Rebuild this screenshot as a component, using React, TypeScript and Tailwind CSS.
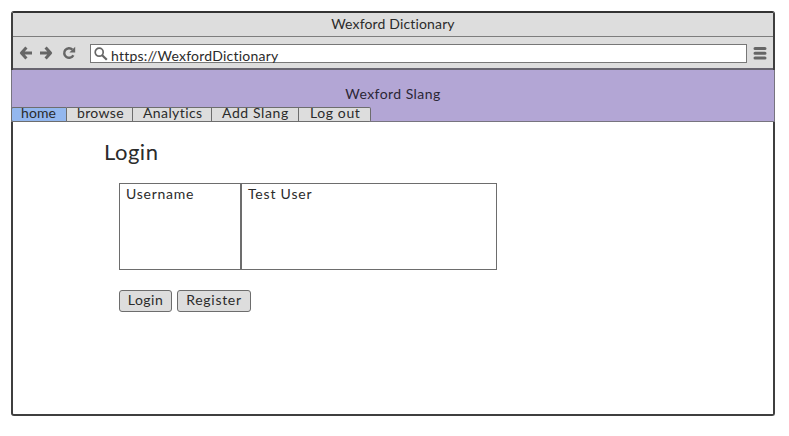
import React from "react";

const tabs = [
  { label: "home", cls: "w-[56px] pl-[9px] bg-[#93b7ee] tracking-[0.1px]" },
  { label: "browse", cls: "w-[66px] pl-[10px] bg-[#dddddd] tracking-[0.35px]" },
  { label: "Analytics", cls: "w-[79px] pl-[10px] bg-[#dddddd] tracking-[0.4px]" },
  { label: "Add Slang", cls: "w-[87px] pl-[10px] bg-[#dddddd] tracking-[0.6px]" },
  { label: "Log out", cls: "w-[72px] pl-[11px] bg-[#dddddd] tracking-[0.6px] rounded-r-[2px]" },
];

function BackIcon() {
  return (
    <svg width="14" height="14" viewBox="0 0 14 14" fill="none" stroke="#666" strokeWidth="3">
      <path d="M7.4 1.6 2.4 7l5 5.4M2.4 7H13" strokeLinejoin="round" />
    </svg>
  );
}

function ReloadIcon() {
  return (
    <svg width="14" height="14" viewBox="0 0 14 14">
      <path d="M10.4 3.6A4.8 4.8 0 1 0 11.3 9.2" fill="none" stroke="#666" strokeWidth="2.5" />
      <path d="M13.2 0.8V6.6H7.4Z" fill="#666" />
    </svg>
  );
}

export default function App() {
  return (
    <div className="h-[436px] w-[789px] bg-white pl-[11px] pt-[11px] font-['Lato',sans-serif] text-[14px] leading-[18px] text-[#2b2b2b]">
      <div className="flex h-[405px] w-[764px] flex-col rounded-[3px] border-2 border-[#3f3f3f] border-t-[#333333] bg-white">
        <div className="flex h-6 shrink-0 justify-center border-b border-[#7d7d7d] bg-[#dddddd] pt-[2px] tracking-[0.15px]">
          Wexford Dictionary
        </div>
        <div className="flex h-[33px] shrink-0 items-start border-b-2 border-[#686570] bg-[#dddddd] pl-[6px] pt-[7px]">
          <div className="mt-[2px] flex">
            <BackIcon />
            <div className="ml-[6px] -scale-x-100"><BackIcon /></div>
            <div className="ml-[9px]"><ReloadIcon /></div>
          </div>
          <div className="ml-[14px] flex h-[19px] w-[657px] border border-[#777] bg-white pl-[3px]">
            <svg className="mt-[2px]" width="14" height="14" viewBox="0 0 14 14" fill="none" stroke="#666">
              <circle cx="5.2" cy="5.2" r="4" strokeWidth="1.7" />
              <path d="M8.2 8.2 12.8 12.8" strokeWidth="2.2" />
            </svg>
            <span className="ml-[3px] mt-[2px] tracking-[0.23px]">https://WexfordDictionary</span>
          </div>
          <svg className="ml-[6px] mt-[2px]" width="14" height="14" viewBox="0 0 14 14" stroke="#666" strokeWidth="3" strokeLinecap="round">
            <path d="M2 2.5H12M2 7.3H12M2 12H12" />
          </svg>
        </div>
        <div className="-mx-[2px] flex h-[52px] shrink-0 flex-col justify-between border-x border-b border-[#77747f] bg-[#b3a6d5]">
          <div className="pt-[15px] text-center tracking-[0.45px] text-[#2b2735]">Wexford Slang</div>
          <nav className="-mb-px -ml-px flex h-[15px] shrink-0">
            {tabs.map((t, i) => (
              <div
                key={t.label}
                className={`flex h-[15px] items-center whitespace-nowrap border-y border-r border-[#6d6d6d] pb-[4px] ${i === 0 ? "rounded-l-[2px] border-l" : ""} ${t.cls}`}
              >
                {t.label}
              </div>
            ))}
          </nav>
        </div>
        <main className="pl-[91px] pt-[16px]">
          <h1 className="text-[22px] leading-[28px] tracking-[0.5px]">Login</h1>
          <div className="ml-[15px] mt-[17px] flex h-[87px]">
            <div className="w-[122px] border border-[#6d6d6d] pl-[6px] pt-px tracking-[0.75px]">Username</div>
            <div className="w-[256px] border border-[#6d6d6d] pl-[6px] pt-px tracking-[0.8px]">Test User</div>
          </div>
          <div className="ml-[15px] mt-[20px] flex gap-[5px]">
            <button className="flex h-[22px] w-[53px] justify-center rounded-[3px] border border-[#6d6d6d] bg-[#dddddd] tracking-[0.5px]">Login</button>
            <button className="flex h-[22px] w-[74px] justify-center rounded-[3px] border border-[#6d6d6d] bg-[#dddddd] tracking-[0.7px]">Register</button>
          </div>
        </main>
      </div>
    </div>
  );
}
